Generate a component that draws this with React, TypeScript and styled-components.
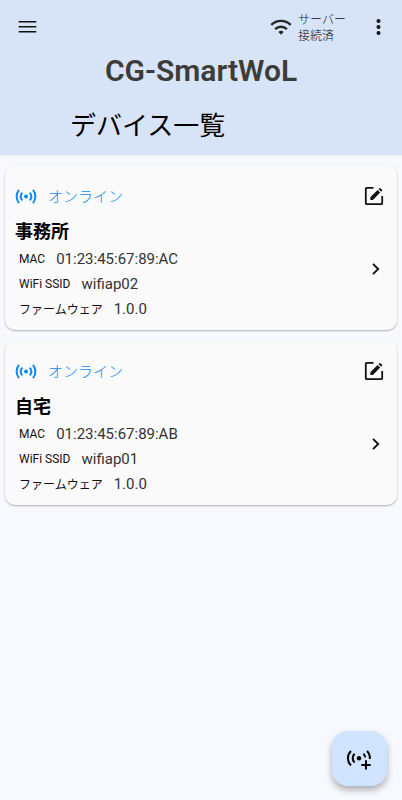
import React from "react";
import styled, { createGlobalStyle } from "styled-components";

const GlobalStyle = createGlobalStyle`
  *, *::before, *::after { box-sizing: border-box; }
  body {
    margin: 0;
    background: #f8f9ff;
    color: #111;
    font-family: Roboto, "Noto Sans CJK JP", sans-serif;
  }
`;

const Screen = styled.div`
  min-height: 100vh;
`;

const Header = styled.header`
  display: flex;
  flex-direction: column;
  padding-bottom: 9px;
  background: #d7e3f7;
  border-bottom: 1px solid #e8effb;
`;

const Toolbar = styled.div`
  display: flex;
  align-items: center;
  justify-content: space-between;
  height: 53px;
  padding: 0 12px 0 16px;
`;

const ToolbarEnd = styled.div`
  display: flex;
  align-items: center;
  gap: 21px;
`;

const IconButton = styled.button`
  display: flex;
  flex: none;
  align-items: center;
  justify-content: center;
  padding: 0;
  border: 0;
  background: none;
  color: #111;
  cursor: pointer;
`;

const ServerStatus = styled.div`
  display: flex;
  align-items: center;
  gap: 6px;
  padding-top: 2px;
  font-size: 12px;
  line-height: 16px;
  font-weight: 300;
  color: #111;
`;

const AppTitle = styled.h1`
  margin: 0;
  font-size: 30px;
  line-height: 36px;
  font-weight: 600;
  text-align: center;
  color: #3c3c38;
`;

const PageTitle = styled.h2`
  margin: 17px 0 0 70px;
  font-size: 26px;
  line-height: 40px;
  font-weight: 400;
  color: #000;
`;

const DeviceList = styled.ul`
  display: flex;
  flex-direction: column;
  gap: 10px;
  margin: 0;
  padding: 9px 5px;
  list-style: none;
`;

const Card = styled.li`
  display: flex;
  justify-content: space-between;
  padding: 20px 13px 9px 10px;
  border-radius: 10px;
  background: #fafafa;
  box-shadow: 0 1px 2px rgba(0, 0, 0, 0.3);
`;

const CardBody = styled.div`
  display: flex;
  flex-direction: column;
`;

const Status = styled.div`
  display: flex;
  align-items: center;
  gap: 11px;
  font-size: 15px;
  line-height: 24px;
  font-weight: 300;
  color: #0d8bf2;
`;

const DeviceName = styled.h3`
  margin: 10px 0 1px;
  font-size: 18px;
  line-height: 26px;
  font-weight: 700;
  color: #000;
`;

const Details = styled.dl`
  margin: 0 0 0 4px;
`;

const Detail = styled.div`
  display: flex;
  align-items: center;
  gap: 11px;
  height: 25px;
`;

const Label = styled.dt`
  font-size: 12px;
  font-weight: 400;
`;

const Value = styled.dd`
  margin: 0;
  font-size: 15px;
  font-weight: 400;
  color: #333;
`;

const CardActions = styled.div`
  display: flex;
  flex-direction: column;
  align-items: center;
  gap: 56px;
  padding-top: 1px;
`;

const ChevronSlot = styled.div`
  padding-left: 4px;
`;

const AddButton = styled.button`
  position: fixed;
  right: 15px;
  bottom: 14px;
  display: flex;
  align-items: center;
  justify-content: center;
  width: 55px;
  height: 55px;
  padding: 0 2px 0 0;
  border: 0;
  border-radius: 16px;
  background: #d1e4ff;
  color: #000;
  box-shadow: 0 4px 7px rgba(0, 0, 0, 0.3);
  cursor: pointer;
`;

const MenuIcon = () => (
  <svg width="23" height="24" viewBox="0 0 23 24" fill="none" stroke="currentColor" strokeWidth="1.6" aria-hidden="true">
    <path d="M2.7 6.8h17.6M2.7 11.8h17.6M2.7 16.8h17.6" />
  </svg>
);

const MoreIcon = () => (
  <svg width="23" height="24" viewBox="0 0 23 24" fill="currentColor" aria-hidden="true">
    <circle cx="11.5" cy="6" r="2" />
    <circle cx="11.5" cy="12" r="2" />
    <circle cx="11.5" cy="18" r="2" />
  </svg>
);

const ChevronIcon = () => (
  <svg width="10" height="14" viewBox="0 0 10 14" fill="none" stroke="currentColor" strokeWidth="1.9" aria-hidden="true">
    <path d="M2 1.8 7.2 7 2 12.2" />
  </svg>
);

const WifiIcon = () => (
  <svg width="22" height="20" viewBox="0 0 22 20" fill="none" stroke="#262622" aria-hidden="true">
    <path d="M1.3 6.8a14 14 0 0 1 19.4 0M5.1 11.1a8.5 8.5 0 0 1 11.8 0" strokeWidth="2.4" />
    <path d="M8.4 13.9a3.8 3.8 0 0 1 5.2 0L11 16.7z" fill="#262622" stroke="none" />
  </svg>
);

const SignalIcon = () => (
  <svg width="22" height="20" viewBox="0 0 22 20" fill="none" stroke="currentColor" strokeWidth="2" aria-hidden="true">
    <path d="M4 2.9a10.4 10.4 0 0 0 0 13.2M18 2.9a10.4 10.4 0 0 1 0 13.2M7.2 5.6a6.3 6.3 0 0 0 0 7.8M14.8 5.6a6.3 6.3 0 0 1 0 7.8" />
    <circle cx="11" cy="9.5" r="2" fill="currentColor" stroke="none" />
  </svg>
);

const EditIcon = () => (
  <svg width="20" height="20" viewBox="0 0 20 20" fill="none" stroke="currentColor" strokeWidth="1.8" aria-hidden="true">
    <path d="M9.5 1.8H2.8a1 1 0 0 0-1 1v14.4a1 1 0 0 0 1 1h14.4a1 1 0 0 0 1-1V10" />
    <path d="M6.3 11.3 13.6 4l2.6 2.6-7.3 7.3H6.3zM14.5 3.1l.9-.9a.8.8 0 0 1 1.1 0l1.5 1.5a.8.8 0 0 1 0 1.1l-.9.9z" fill="currentColor" stroke="none" />
  </svg>
);

const AddSignalIcon = () => (
  <svg width="26" height="22" viewBox="0 0 26 22" fill="none" stroke="currentColor" strokeWidth="2" aria-hidden="true">
    <path d="M5 3a10 10 0 0 0 0 14.4M8.6 5.8a6 6 0 0 0 0 8.8M17.4 5.8a6 6 0 0 1 1.8 3.6M21 3a10 10 0 0 1 2.8 8" />
    <circle cx="13" cy="10.2" r="2.2" fill="currentColor" stroke="none" />
    <path d="M20 12.2v9.4M15.3 16.9h9.4" />
  </svg>
);

interface Device {
  name: string;
  mac: string;
  ssid: string;
  firmware: string;
}

const devices: Device[] = [
  { name: "事務所", mac: "01:23:45:67:89:AC", ssid: "wifiap02", firmware: "1.0.0" },
  { name: "自宅", mac: "01:23:45:67:89:AB", ssid: "wifiap01", firmware: "1.0.0" },
];

const DeviceCard = ({ device }: { device: Device }) => (
  <Card>
    <CardBody>
      <Status>
        <SignalIcon />
        オンライン
      </Status>
      <DeviceName>{device.name}</DeviceName>
      <Details>
        <Detail>
          <Label>MAC</Label>
          <Value>{device.mac}</Value>
        </Detail>
        <Detail>
          <Label>WiFi SSID</Label>
          <Value>{device.ssid}</Value>
        </Detail>
        <Detail>
          <Label>ファームウェア</Label>
          <Value>{device.firmware}</Value>
        </Detail>
      </Details>
    </CardBody>
    <CardActions>
      <IconButton type="button" aria-label={`${device.name}を編集`}>
        <EditIcon />
      </IconButton>
      <ChevronSlot>
        <IconButton type="button" aria-label={`${device.name}を開く`}>
          <ChevronIcon />
        </IconButton>
      </ChevronSlot>
    </CardActions>
  </Card>
);

export default function App() {
  return (
    <Screen>
      <GlobalStyle />
      <Header>
        <Toolbar>
          <IconButton type="button" aria-label="メニュー">
            <MenuIcon />
          </IconButton>
          <ToolbarEnd>
            <ServerStatus>
              <WifiIcon />
              <span>
                サーバー
                <br />
                接続済
              </span>
            </ServerStatus>
            <IconButton type="button" aria-label="その他">
              <MoreIcon />
            </IconButton>
          </ToolbarEnd>
        </Toolbar>
        <AppTitle>CG-SmartWoL</AppTitle>
        <PageTitle>デバイス一覧</PageTitle>
      </Header>
      <main>
        <DeviceList>
          {devices.map((device) => (
            <DeviceCard key={device.mac} device={device} />
          ))}
        </DeviceList>
      </main>
      <AddButton type="button" aria-label="デバイスを追加">
        <AddSignalIcon />
      </AddButton>
    </Screen>
  );
}
